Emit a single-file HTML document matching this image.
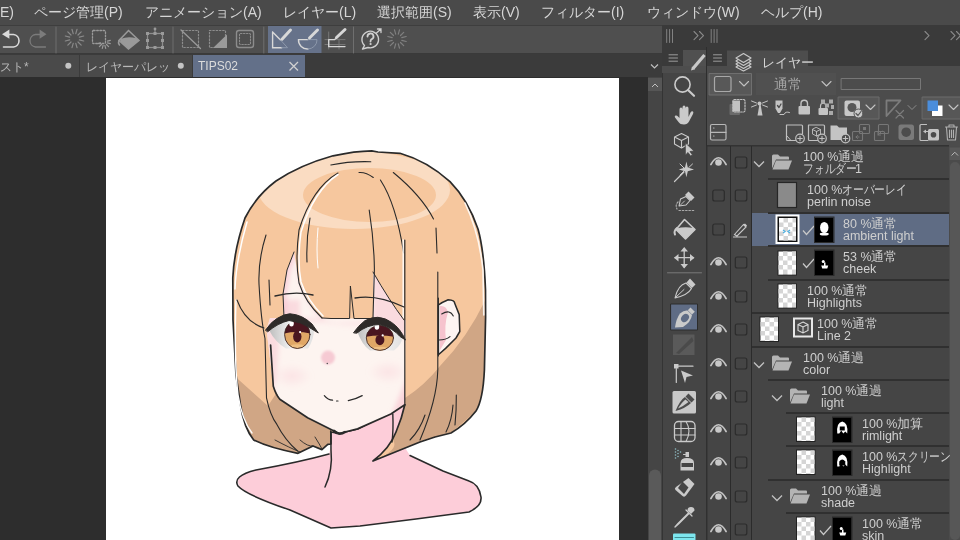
<!DOCTYPE html>
<html><head><meta charset="utf-8"><style>
*{margin:0;padding:0;box-sizing:border-box}
html,body{width:960px;height:540px;overflow:hidden;background:#2d2d2d;font-family:"Liberation Sans",sans-serif;color:#dcdcdc}
.a{position:absolute}
#menu{left:0;top:0;width:960px;height:25px;background:#4a4a4a}
#menu span{position:absolute;top:4px;font-size:14px;color:#d6d6d6;white-space:nowrap}
.gs{will-change:transform}
#tb{left:0;top:25px;width:662px;height:29px;background:#4f4f4f;border-top:1px solid #3e3e3e;border-bottom:1px solid #3a3a3a}
#tabs{left:0;top:54px;width:662px;height:23px;background:#3b3b3b}
.tab{position:absolute;top:1px;height:22px;background:#4a4a4a;font-size:12px;color:#b8b8b8;white-space:nowrap;overflow:hidden}
#canvasbg{left:0;top:77px;width:648px;height:463px;background:#2d2d2d}
#paper{left:106px;top:78px;width:513px;height:462px;background:#fff;overflow:hidden}
#vscroll{left:648px;top:77px;width:14px;height:463px;background:#434343}
#phead{left:662px;top:25px;width:298px;height:22px;background:#393939}
#tools{left:662px;top:47px;width:45px;height:493px;background:#464646}
#layers{left:707px;top:47px;width:253px;height:493px;background:#474747}
.kn{display:inline-block;white-space:nowrap;vertical-align:top}.kn span{display:inline-block;transform:scaleX(0.83);transform-origin:0 0}
.lt{position:absolute;font-size:12.5px;line-height:12px;color:#cfcfcf;white-space:nowrap}
</style></head><body><div class="gs a" style="left:0;top:0;width:960px;height:540px">
<div id="menu" class="a"><span style="left:0px">E)</span><span style="left:34px">ページ管理(P)</span><span style="left:145px">アニメーション(A)</span><span style="left:283px">レイヤー(L)</span><span style="left:377px">選択範囲(S)</span><span style="left:473px">表示(V)</span><span style="left:541px">フィルター(I)</span><span style="left:647px">ウィンドウ(W)</span><span style="left:761px">ヘルプ(H)</span></div>
<div id="tb" class="a"></div>
<svg class="a" style="left:0;top:0" width="662" height="54" viewBox="0 0 662 54">
<rect x="268" y="26" width="53.5" height="27" fill="#66728a"/>
<g fill="none" stroke-linecap="round">
<!-- undo -->
<path d="M2 34.2L9.4 29.6L9.4 38.8Z" fill="#dadada"/>
<path d="M8 34.5H13.5A6.3 6.3 0 0 1 13.5 47H3.5" stroke="#dadada" stroke-width="1.6"/>
<!-- redo -->
<path d="M46.5 34.2L39.6 29.6L39.6 38.8Z" fill="#7c7c7c"/>
<path d="M41 34.5H35.5A6.3 6.3 0 0 0 35.5 47H45.5" stroke="#7c7c7c" stroke-width="1.3"/>
<path d="M56 27V53" stroke="#6f6f6f" stroke-width="1"/>
<path d="M79.3 39.8L83.7 41.0M78.0 42.0L81.2 45.2M75.8 43.3L77.0 47.7M73.2 43.3L72.0 47.7M71.0 42.0L67.8 45.2M69.7 39.8L65.3 41.0M69.7 37.2L65.3 36.0M71.0 35.0L67.8 31.8M73.2 33.7L72.0 29.3M75.8 33.7L77.0 29.3M78.0 35.0L81.2 31.8M79.3 37.2L83.7 36.0" stroke="#8a8a8a" stroke-width="1.2" stroke-linecap="round" fill="none"/>
<rect x="92.5" y="30.5" width="13" height="13" rx="1" stroke="#9a9a9a" stroke-width="1.3" stroke-dasharray="1.6 1.6"/>
<path d="M107.4 42.9L110.3 43.7M106.5 44.5L108.6 46.6M104.9 45.4L105.7 48.3M103.1 45.4L102.3 48.3M101.5 44.5L99.4 46.6M100.6 42.9L97.7 43.7M107.4 41.1L110.3 40.3" stroke="#9a9a9a" stroke-width="1.2" stroke-linecap="round" fill="none"/>
<!-- fill diamond -->
<path d="M128.5 30.5L139 40.5L128.5 49L119 40.5Z" stroke="#9a9a9a" stroke-width="1.5"/>
<path d="M121 38.8Q128 36 136.5 38.3L139 40.5L128.5 49L120 41Z" fill="#9a9a9a"/>
<path d="M121 38.5Q117 42 119.5 45" stroke="#9a9a9a" stroke-width="1.6"/>
<!-- transform -->
<rect x="147.5" y="33.5" width="15" height="14" stroke="#8e8e8e" stroke-width="1.3"/>
<path d="M155 33.5V29" stroke="#8e8e8e" stroke-width="1.2"/>
<g fill="#9a9a9a"><rect x="146" y="32" width="3" height="3"/><rect x="161" y="32" width="3" height="3"/><rect x="146" y="46" width="3" height="3"/><rect x="161" y="46" width="3" height="3"/><rect x="153.5" y="32" width="3" height="3"/><rect x="153.5" y="46" width="3" height="3"/><rect x="146" y="39" width="3" height="3"/><rect x="161" y="39" width="3" height="3"/><circle cx="155" cy="29" r="1.4"/></g>
<path d="M173 27V53" stroke="#6f6f6f" stroke-width="1"/>
<!-- dotted square diag -->
<rect x="182.5" y="30.5" width="16" height="17" stroke="#8c8c8c" stroke-width="1.2" stroke-dasharray="1.5 1.8"/>
<path d="M181 30L200.5 48.5" stroke="#9a9a9a" stroke-width="1.3"/>
<rect x="209.5" y="30.5" width="16" height="17" stroke="#8c8c8c" stroke-width="1.2" stroke-dasharray="1.5 1.8"/>
<path d="M227 34.5V48H213Z" fill="#9a9a9a"/>
<rect x="236.5" y="30.5" width="17" height="17" rx="2.5" stroke="#8c8c8c" stroke-width="1.4"/>
<rect x="239.5" y="33.5" width="11" height="11" rx="1" stroke="#8c8c8c" stroke-width="1.1" stroke-dasharray="1.5 1.5"/>
<path d="M263.8 27V53" stroke="#6f6f6f" stroke-width="1"/>
<!-- ruler triangle -->
<path d="M272.6 32V47.7H281.7M272.6 32L280.5 40" stroke="#d8d8d8" stroke-width="1.4"/>
<path d="M281.7 47.7H287.5L280.5 40" stroke="#8d98ab" stroke-width="1"/>
<path d="M282 39.2L290.5 30" stroke="#d8d8d8" stroke-width="3"/>
<!-- semicircle -->
<path d="M298.5 39.6H308" stroke="#d8d8d8" stroke-width="1.4"/>
<path d="M298.5 39.6A9 9 0 0 0 308 49" stroke="#d8d8d8" stroke-width="1.4"/>
<path d="M308 49A9 9 0 0 0 317 39.6H308" stroke="#8d98ab" stroke-width="1"/>
<path d="M309.5 38L317.5 30" stroke="#d8d8d8" stroke-width="3"/>
<!-- grid ruler -->
<path d="M328.7 32V49M325 39.6H345M339 39V49M325 44.5H345" stroke="#777" stroke-width="1"/>
<path d="M328.7 39.6V46.6H345M328.7 39.6H334.5L336 38.5" stroke="#d6d6d6" stroke-width="1.4"/>
<path d="M336.5 37.5L345 29.5" stroke="#d6d6d6" stroke-width="3"/>
<path d="M353.5 27V53" stroke="#6f6f6f" stroke-width="1"/>
<!-- help -->
<path d="M364.5 45.5A8.3 8.3 0 1 1 368 47.5L362.5 49Z" stroke="#d0d0d0" stroke-width="1.4" stroke-linejoin="round"/>
<path d="M376.5 33L381 29M377.5 29H381V32.5" stroke="#d0d0d0" stroke-width="1.3"/>
<path d="M367.5 36.5A3 3 0 1 1 371.5 39.3Q370.5 40 370.5 41.5" stroke="#d0d0d0" stroke-width="1.8"/>
<circle cx="370.6" cy="44" r="1.1" fill="#d0d0d0"/>
<path d="M401.8 40.3L406.2 41.5M400.5 42.5L403.7 45.7M398.3 43.8L399.5 48.2M395.7 43.8L394.5 48.2M393.5 42.5L390.3 45.7M392.2 40.3L387.8 41.5M392.2 37.7L387.8 36.5M393.5 35.5L390.3 32.3M395.7 34.2L394.5 29.8M398.3 34.2L399.5 29.8M400.5 35.5L403.7 32.3M401.8 37.7L406.2 36.5" stroke="#808080" stroke-width="1.2" stroke-linecap="round" fill="none"/>
</g></svg>
<div id="tabs" class="a">
<div class="tab" style="left:0;width:79px"><span class="a" style="left:0;top:4px">スト*</span></div>
<div class="tab" style="left:80px;width:112px"><span class="a" style="left:6px;top:4px">レイヤーパレッ</span></div>
<div class="tab" style="left:193px;width:112px;background:#637089;color:#dcdcdc"><span class="a" style="left:5px;top:4px">TIPS02</span></div>
<svg class="a" style="left:0;top:0" width="662" height="23">
<circle cx="68.3" cy="11.8" r="3" fill="#c4c4c4"/><circle cx="180.8" cy="11.8" r="3" fill="#c4c4c4"/>
<path d="M289.5 8L298 16.5M298 8L289.5 16.5" stroke="#d0d0d0" stroke-width="1.3"/>
<path d="M651 10.5L654.5 14L658 10.5" stroke="#c0c0c0" stroke-width="1.2" fill="none"/>
</svg>
</div>
<div id="canvasbg" class="a"></div>
<div id="paper" class="a"><svg class="a" style="left:0;top:0" width="513" height="462" viewBox="106 78 513 462"><g stroke-linecap="round" stroke-linejoin="round">
<defs><clipPath id="hc"><path d="M331 444 L327.8 444.4 L321.9 449.6 L313 446 L298 453.3 Q270 448 253.7 440 Q244 428 240.5 405 L236 375 L233 320 L232.8 278 Q234 250 245 218 Q256 196 276 181 Q300 165 333 155.8 Q355 151 371.7 150.8 L378 152 L400 153.3 Q427 161 450 181.7 Q468 200 478 229 Q484 250 485.5 290 L485.6 317 L484.4 370 Q483 400 476 411 Q465 425 451 433 L435 437 L420 442 Q400 450 373 461 Q390 448 396 432 Q402 418 404.8 404.8 L357.6 428.9 L339 433.5 L331 432 Z"/></clipPath><radialGradient id="bl"><stop offset="0" stop-color="#f7c3cf" stop-opacity="0.35"/><stop offset="1" stop-color="#f7c3cf" stop-opacity="0"/></radialGradient></defs>
<path d="M331 446 L329 454 Q300 462 256 470 Q232 476 240 487 Q250 496 290 510 L331 528 L360 526 L416 519 L469 512 Q482 506 481 497 Q479 484 469 481 L443 471 L410 455.5 L400 440 L405 404 L339 433.5 L331 432 Z" fill="#fdcdd9"/>
<path d="M329 454 Q300 462 256 470 Q232 476 238 486 Q246 495 290 510 L331 528 L360 526 L416 519 L469 512 Q482 506 481 497 Q479 484 469 481 L443 471 L410 455.5" fill="none" stroke="#2a2a2a" stroke-width="1.6"/>
<path d="M331 444 L327.8 444.4 L321.9 449.6 L313 446 L298 453.3 Q270 448 253.7 440 Q244 428 240.5 405 L236 375 L233 320 L232.8 278 Q234 250 245 218 Q256 196 276 181 Q300 165 333 155.8 Q355 151 371.7 150.8 L378 152 L400 153.3 Q427 161 450 181.7 Q468 200 478 229 Q484 250 485.5 290 L485.6 317 L484.4 370 Q483 400 476 411 Q465 425 451 433 L435 437 L420 442 Q400 450 373 461 Q390 448 396 432 Q402 418 404.8 404.8 L357.6 428.9 L339 433.5 L331 432 Z" fill="#f6c79e"/>
<g clip-path="url(#hc)">
<path d="M258 190 A96 39 0 1 0 450 190 A96 39 0 1 0 258 190 Z M303 195 A66.5 27 0 1 1 436 195 A66.5 27 0 1 1 303 195 Z" fill="#fadcc2" fill-rule="evenodd"/>
<path d="M230 372 Q250 390 268 406 L277 392 Q290 405 307.6 417.8 L331 430 L331 460 L230 460 Z" fill="#d0a685"/>
<path d="M490 290 Q470 335 440 366 Q425 385 405 398 L393 440 Q400 450 373 461 L420 442 L435 437 L451 433 L476 411 L490 380 Z" fill="#d0a685"/>
<path d="M237 385 Q240 415 250 433 L245 433 Q236 410 234 385 Z" fill="#fbe6c8"/>
</g>
<path d="M331 444 L327.8 444.4 L321.9 449.6 L313 446 L298 453.3 Q270 448 253.7 440 Q244 428 240.5 405 L236 375 L233 320 L232.8 278 Q234 250 245 218 Q256 196 276 181 Q300 165 333 155.8 Q355 151 371.7 150.8 L378 152 L400 153.3 Q427 161 450 181.7 Q468 200 478 229 Q484 250 485.5 290 L485.6 317 L484.4 370 Q483 400 476 411 Q465 425 451 433 L435 437 L420 442 Q400 450 373 461 Q390 448 396 432 Q402 418 404.8 404.8 L357.6 428.9 L339 433.5 L331 432 Z" fill="none" stroke="#2a2a2a" stroke-width="1.7"/>
<path d="M236 300 Q234 360 238 395 Q242 420 252 433" fill="none" stroke="#fff" stroke-width="1.4"/>
<path d="M266.5 329.6 L270 318 L284 318 L283 294 L287 270 L294 252 L297 270 L300 283 L308 300 L317 313 L322 318 L331 318.5 L373 318.5 L373 272 Q389 300 404 320 L405.5 320 L404.8 404.8 L390.9 414 L357.6 428.9 L339 433.5 L307.6 417.8 L279.8 399.3 L273.3 386.3 Z" fill="#fdf4f0"/>
<defs><clipPath id="fc"><path d="M266.5 329.6 L270 318 L284 318 L283 294 L287 270 L294 252 L297 270 L300 283 L308 300 L317 313 L322 318 L331 318.5 L373 318.5 L373 272 Q389 300 404 320 L405.5 320 L404.8 404.8 L390.9 414 L357.6 428.9 L339 433.5 L307.6 417.8 L279.8 399.3 L273.3 386.3 Z"/></clipPath><filter id="blr" x="-20%" y="-20%" width="140%" height="140%"><feGaussianBlur stdDeviation="2.5"/></filter></defs><g clip-path="url(#fc)"><g filter="url(#blr)">
<path d="M260 300 L300 300 L300 318 Q320 318 335 323 L372 322 L373 270 L410 270 L410 345 Q398 328 385 323 L372 324 Q340 326 325 322 Q300 320 290 325 L280 335 L276 380 Q272 390 275 395 L260 395 Z" fill="#f8c9d3" opacity="0.6"/>
<path d="M410 370 Q400 395 392 414 L410 414 Z" fill="#f8c9d3" opacity="0.75"/>
<path d="M294 252 L287 270 L283 294 L284 318" fill="none" stroke="#f8c9d3" stroke-width="7" opacity="0.8"/>
<path d="M299 270 Q303 295 322 318" fill="none" stroke="#f8c9d3" stroke-width="4" opacity="0.6"/>
<ellipse cx="292" cy="376" rx="20" ry="12" fill="url(#bl)"/><ellipse cx="388" cy="372" rx="20" ry="12" fill="url(#bl)"/>
</g></g>
<path d="M270.6 345 L273.3 386.3 Q276 395 279.8 399.3 L307.6 417.8 L339 433.5 L357.6 428.9 L390.9 414 L404.8 404.8" fill="none" stroke="#2a2a2a" stroke-width="1.7"/>
<path d="M334 431 Q339 436 345 432" fill="none" stroke="#2a2a2a" stroke-width="2.6"/>
<path d="M275 440 Q290 448 300 452 M300 440 Q308 447 313 446 M315 437 Q320 445 322 449" fill="none" stroke="#2a2a2a" stroke-width="0.9"/>
<path d="M392.8 414 Q393.5 430 392 442" fill="none" stroke="#2a2a2a" stroke-width="1.4"/>
<path d="M330.7 431 Q331 440 331 450 Q333 470 325 487" fill="none" stroke="#2a2a2a" stroke-width="1.5"/>
<path d="M338 173 Q312 188 299 230 Q295 260 299 283 Q305 302 322 318" fill="none" stroke="#2a2a2a" stroke-width="1.1"/>
<path d="M338 174.5 Q314 190 301 232 Q297 260 301 282 Q307 300 323 316" fill="none" stroke="#fff" stroke-width="1.5"/>
<path d="M369.2 210 Q374 240 374.4 269 L373 318" fill="none" stroke="#2a2a2a" stroke-width="1.1"/>
<path d="M380.4 180 Q396 203.7 403.7 253" fill="none" stroke="#2a2a2a" stroke-width="1.1"/>
<path d="M465 203 Q479 232 483 270 L483.8 315" fill="none" stroke="#fff" stroke-width="1.6" opacity="0.85"/>
<path d="M393.3 172.5 Q421.8 196 433.5 219 M436 228 L437 253" fill="none" stroke="#2a2a2a" stroke-width="1.1"/>
<path d="M330.8 165 Q350 161 370.8 161.7 M359 172.5 Q366 172 373.3 177.5" fill="none" stroke="#2a2a2a" stroke-width="1.1"/>
<path d="M403.2 240 L403.2 318" fill="none" stroke="#fff" stroke-width="1.3"/>
<path d="M404.8 240 L404.8 404.8" fill="none" stroke="#2a2a2a" stroke-width="1.2"/>
<path d="M437.8 272 V370 Q437 400 420 440" fill="none" stroke="#2a2a2a" stroke-width="1.1"/>
<path d="M266 235 Q258 260 259 284 Q261 320 265 338.5 L266.5 397.8 Q270 415 276.9 424.4 Q285 440 297.6 451" fill="none" stroke="#2a2a2a" stroke-width="1.1"/>
<path d="M237 300 Q245 322 264 328" fill="none" stroke="#2a2a2a" stroke-width="1.1"/>
<path d="M247 222 Q236 260 235 289" fill="none" stroke="#fff" stroke-width="1.5"/>
<path d="M269 280 L270 305" fill="none" stroke="#2a2a2a" stroke-width="1.1"/>
<path d="M310 218 Q306 240 307 262" fill="none" stroke="#2a2a2a" stroke-width="1.1"/>
<path d="M318 228 Q316 250 318 268" fill="none" stroke="#fff" stroke-width="1"/>
<path d="M456.3 395 Q456.5 410 455 425" fill="none" stroke="#2a2a2a" stroke-width="1.1"/>
<path d="M410 440 Q420 430 425 415 M446 432 Q452 420 453 405" fill="none" stroke="#2a2a2a" stroke-width="1.1"/>
<path d="M322 318 L331 318.5 L349.6 318.5 L350.4 286 L354 318.5 L373 318.5" fill="none" stroke="#2a2a2a" stroke-width="1"/>
<path d="M373 272 Q389 300 404 320" fill="none" stroke="#2a2a2a" stroke-width="1"/>
<path d="M294 252 L287 270 L283 294 L284 318" fill="none" stroke="#2a2a2a" stroke-width="1"/>
<path d="M275 296 Q295 291 313 295 M355 298 Q377 294 404 307" fill="none" stroke="#2a2a2a" stroke-width="1.3"/>
<defs><clipPath id="ir1"><ellipse cx="297.3" cy="334.6" rx="12.7" ry="13.9"/></clipPath><linearGradient id="wg1" x1="0" x2="1"><stop offset="0" stop-color="#bdbdbd"/><stop offset="0.5" stop-color="#f4f4f4"/><stop offset="1" stop-color="#e0e0e0"/></linearGradient></defs><path d="M269 330 Q275 342 286 348.5 L308 348.5 Q314 340 314 328 Q300 319 288 320 Q276 323 269 330Z" fill="url(#wg1)"/><ellipse cx="297.3" cy="334.6" rx="12.7" ry="13.9" fill="#e0a766"/><g clip-path="url(#ir1)"><path d="M283.6 319.70000000000005H311.0V333.6Q297.3 330.6 283.6 333.6Z" fill="#4a1620"/><ellipse cx="297.3" cy="336.6" rx="4.191" ry="5.838" fill="#4a1620"/><ellipse cx="297.3" cy="348.5" rx="10.16" ry="4.17" fill="#efbf82"/></g><ellipse cx="297.3" cy="334.6" rx="12.7" ry="13.9" fill="none" stroke="#3d2626" stroke-width="0.9"/><ellipse cx="291.5" cy="323.5" rx="2.3" ry="2.9" fill="#fff"/><circle cx="300.1" cy="332.1" r="1.1" fill="#fff"/><path d="M265.6 330 Q271 322 277 318.5 Q284 314 290 313.8 Q302 314.5 312 324 L318.3 333 L311 328.5 Q301 321.5 289 320.5 Q278 323 268 331.5 Z" fill="#2e2a28" stroke="#2e2a28" stroke-width="1"/>
<defs><clipPath id="ir2"><ellipse cx="379.9" cy="337.9" rx="13.6" ry="12.5"/></clipPath><linearGradient id="wg2" x1="0" x2="1"><stop offset="0" stop-color="#bdbdbd"/><stop offset="0.5" stop-color="#f4f4f4"/><stop offset="1" stop-color="#e0e0e0"/></linearGradient></defs><path d="M357 331 Q362 345 370 350.5 L394 350.5 Q402 345 403 335 Q393 325 380 323 Q366 324 357 331Z" fill="url(#wg2)"/><ellipse cx="379.9" cy="337.9" rx="13.6" ry="12.5" fill="#e0a766"/><g clip-path="url(#ir2)"><path d="M365.29999999999995 324.4H394.5V336.9Q379.9 333.9 365.29999999999995 336.9Z" fill="#4a1620"/><ellipse cx="379.9" cy="339.9" rx="4.488" ry="5.25" fill="#4a1620"/><ellipse cx="379.9" cy="350.4" rx="10.88" ry="3.75" fill="#efbf82"/></g><ellipse cx="379.9" cy="337.9" rx="13.6" ry="12.5" fill="none" stroke="#3d2626" stroke-width="0.9"/><ellipse cx="376.9" cy="326.8" rx="2.3" ry="2.9" fill="#fff"/><circle cx="382.7" cy="335.4" r="1.1" fill="#fff"/><path d="M353.7 332.5 Q358 326 364.8 320.7 Q372 317 377.8 317.3 Q386 318 391.7 322.5 Q400 328 405.5 340 L400 336.5 Q393 328 380 324.5 Q367 324.5 357 333 Z" fill="#2e2a28" stroke="#2e2a28" stroke-width="1"/>
<defs><filter id="nb" x="-50%" y="-50%" width="200%" height="200%"><feGaussianBlur stdDeviation="1.2"/></filter></defs><circle cx="328" cy="357.6" r="7" fill="#f6cad3" filter="url(#nb)"/><circle cx="327.3" cy="363.5" r="0.8" fill="#555"/>
<path d="M324.3 395.6 Q328 400 332.6 400.2 M336.5 401 L338 401 M348.3 400.7 Q356 399 362.2 395.6" fill="none" stroke="#2a2a2a" stroke-width="1.2"/>
<path d="M438.4 305 Q441.7 302.3 448.2 299.7 Q454.6 300 454.6 303 L459.2 314.6 L459.8 331.5 L456 338 L445.6 348.4 L438.4 354.8 Z" fill="#fdf4f2" stroke="#2a2a2a" stroke-width="1.5"/>
<path d="M440 306 Q446 305 448 312 Q444 325 446 340 L440 350 Z" fill="#f6c3ce"/>
<path d="M441.7 314 Q450 309 453.3 316 M439 340 Q446 340 450 336.7" fill="none" stroke="#2a2a2a" stroke-width="1.1"/>
<path d="M438.4 298 V356" fill="none" stroke="#2a2a2a" stroke-width="1.1"/>
</g></svg></div>
<div id="vscroll" class="a"></div>
<div id="phead" class="a"></div>
<div id="tools" class="a"></div>
<div id="layers" class="a"></div>
<svg class="a" style="left:0;top:0" width="960" height="146">
<g fill="none" stroke-linecap="round" stroke-linejoin="round">
<rect x="662" y="25" width="298" height="22" fill="#3a3a3a" stroke="none"/>
<path d="M666.7 29.5V42.5M669.6 29.5V42.5M672.5 29.5V42.5M711.2 29.5V42.5M714.1 29.5V42.5M717 29.5V42.5" stroke="#8a8a8a" stroke-width="0.9"/>
<path d="M694 31.5L698 35.6L694 39.7M699.5 31.5L703.5 35.6L699.5 39.7" stroke="#8a8a8a" stroke-width="1.1"/>
<path d="M925 31.5L929 35.6L925 39.7M951 31.5L955 35.6L951 39.7M956.5 31.5L960.5 35.6L956.5 39.7" stroke="#8a8a8a" stroke-width="1.1"/>
<rect x="662" y="47" width="45" height="26" fill="#3a3a3a" stroke="none"/>
<rect x="683" y="50" width="23" height="17" fill="#505050" stroke="none"/>
<rect x="662" y="66" width="44" height="7" fill="#4d4d4d" stroke="none"/>
<path d="M669 54.8H677.5M669 58H677.5M669 61.2H677.5" stroke="#9c9c9c" stroke-width="1"/>
<path d="M693 68.5L704.5 55" stroke="#c8c8c8" stroke-width="3.2" stroke-linecap="butt"/><path d="M691 70.5L692 66.5L695 69.2Z" fill="#c8c8c8" stroke="none"/>
<rect x="662" y="73" width="44" height="73" fill="#454545" stroke="none"/><rect x="662" y="73" width="1" height="73" fill="#343434" stroke="none"/>
<rect x="706" y="47" width="1.2" height="99" fill="#2e2e2e" stroke="none"/>
<rect x="707" y="47" width="253" height="19" fill="#3a3a3a" stroke="none"/>
<rect x="727" y="50.5" width="81" height="16" fill="#4d4d4d" stroke="none"/>
<path d="M713.5 54.8H721.5M713.5 58H721.5M713.5 61.2H721.5" stroke="#9c9c9c" stroke-width="1"/>
</g></svg>
<svg class="a" style="left:0;top:0" width="960" height="146"><g fill="none" stroke-linecap="round" stroke-linejoin="round">
<rect x="707" y="66" width="253" height="80" fill="#4c4c4c" stroke="none"/>
<path d="M743.5 53.5L751 58L743.5 62.5L736 58Z" stroke="#c8c8c8" stroke-width="1.2"/>
<path d="M738.2 59.5L736 61L743.5 65.5L751 61L748.8 59.5M738.2 62.5L736 64L743.5 68.5L751 64L748.8 62.5M738.2 65.5L736 67L743.5 71L751 67L748.8 65.5" stroke="#c8c8c8" stroke-width="1.2"/>
<rect x="709.5" y="73.5" width="42" height="21.5" fill="#585858" stroke="#6f6f6f" stroke-width="1"/>
<rect x="714.5" y="76.5" width="16.5" height="15" rx="2" stroke="#a8a8a8" stroke-width="1.2"/>
<path d="M739.5 81.5L744 86L748.5 81.5" stroke="#c0c0c0" stroke-width="1.1"/>
<rect x="756" y="73" width="80" height="22" fill="#505050" stroke="none"/>
<path d="M822 81.5L826.5 86L831 81.5" stroke="#c0c0c0" stroke-width="1.1"/>
<rect x="841.5" y="78.5" width="79" height="11" stroke="#777" stroke-width="1"/>
<rect x="729.5" y="104" width="10.5" height="11" rx="1" fill="#6a6a6a" stroke="none"/>
<rect x="732.5" y="100.5" width="7.5" height="11" fill="#c2c2c2" stroke="none"/>
<rect x="733" y="99.5" width="12" height="12.5" rx="1.5" stroke="#c2c2c2" stroke-width="1.2" stroke-dasharray="1.6 1.4"/>
<path d="M757.5 115.5L759.5 104H760.5L762.5 115.5Z" fill="#c4c4c4" stroke="none"/><circle cx="759.5" cy="103.5" r="2" fill="#c4c4c4" stroke="none"/>
<path d="M751.5 101L756.5 103M767.5 101L762.5 103M751.5 107L756.5 105M767.5 107L762.5 105" stroke="#c4c4c4" stroke-width="1"/>
<path d="M775.5 100.5H782.5V108.5L780 113H778L775.5 108.5Z" fill="#c4c4c4" stroke="none"/><path d="M777.5 105.5L779 107.5L781 104" stroke="#4c4c4c" stroke-width="1.3"/>
<path d="M780 114.5H784Q785.5 111 789.5 112.5" stroke="#c4c4c4" stroke-width="1"/>
<rect x="798.5" y="106" width="11.5" height="8.5" rx="1" fill="#c4c4c4" stroke="none"/><path d="M801 106V103.5A3.2 3.2 0 0 1 807.5 103.5V106" stroke="#c4c4c4" stroke-width="1.4"/>
<rect x="818.5" y="108" width="9.5" height="7" rx="1" fill="#c4c4c4" stroke="none"/><path d="M820.5 108V106A2.7 2.7 0 0 1 826 106V108" stroke="#c4c4c4" stroke-width="1.2"/>
<g fill="#aaa" stroke="none"><rect x="821" y="99.5" width="4" height="4"/><rect x="829" y="99.5" width="4" height="4"/><rect x="825" y="103.5" width="4" height="4"/><rect x="829" y="111" width="4" height="4"/><rect x="831" y="105" width="3" height="4"/></g>
<rect x="838.5" y="97" width="40.5" height="22" fill="#575757" stroke="#6c6c6c" stroke-width="1"/>
<rect x="844.5" y="100.5" width="15.5" height="15.5" rx="2" fill="#c8c8c8" stroke="none"/><circle cx="852" cy="107.5" r="4.5" fill="#575757" stroke="none"/>
<circle cx="858.5" cy="113.5" r="4.5" fill="#c8c8c8" stroke="#575757" stroke-width="1"/><path d="M856 113.5L858 115.5L861 111.5" stroke="#575757" stroke-width="1.2"/>
<path d="M866 105L870.5 109.5L875 105" stroke="#c4c4c4" stroke-width="1.1"/>
<path d="M886.5 116L900.5 100.5L886.5 100.5Z" stroke="#7c7c7c" stroke-width="1.8"/><path d="M896 110.5L903.5 118M903.5 110.5L896 118" stroke="#7c7c7c" stroke-width="1.2"/>
<path d="M908 105.5L912 109.5L916 105.5" stroke="#8a8a8a" stroke-width="1"/>
<rect x="922.5" y="97" width="40" height="22" fill="#575757" stroke="#6c6c6c" stroke-width="1"/>
<rect x="932" y="105.5" width="10.5" height="10.5" fill="#fff" stroke="none"/><rect x="927.5" y="100.5" width="10.5" height="10.5" fill="#4a8ddb" stroke="none"/>
<path d="M949 105L953.5 109.5L958 105" stroke="#c4c4c4" stroke-width="1.1"/>
<rect x="710.5" y="124.5" width="15.5" height="15.5" rx="1.5" stroke="#b8b8b8" stroke-width="1.2"/><path d="M710.5 132.3H726M713.5 128H714M713.5 136H714" stroke="#b8b8b8" stroke-width="1.2"/>
<path d="M786.5 125H801.5Q802.5 125 802.5 126V134M795.5 140.5H787.5Q786.5 140.5 786.5 139.5V125" stroke="#c0c0c0" stroke-width="1.2"/><path d="M787 136L790.5 140" stroke="#c0c0c0" stroke-width="1"/><circle cx="800" cy="138.5" r="4.3" fill="#4c4c4c" stroke="#c0c0c0" stroke-width="1.2"/><path d="M797.7 138.5H802.3M800 136.2V140.8" stroke="#c0c0c0" stroke-width="1.1"/>
<path d="M808.5 125H823.5Q824.5 125 824.5 126V134M817.5 140.5H809.5Q808.5 140.5 808.5 139.5V125" stroke="#c0c0c0" stroke-width="1.2"/><path d="M816.5 127.5L820.5 129.5V134L816.5 136L812.5 134V129.5ZM812.5 129.5L816.5 131.5L820.5 129.5M816.5 131.5V136" stroke="#c0c0c0" stroke-width="0.9"/><circle cx="822" cy="138.5" r="4.3" fill="#4c4c4c" stroke="#c0c0c0" stroke-width="1.2"/><path d="M819.7 138.5H824.3M822 136.2V140.8" stroke="#c0c0c0" stroke-width="1.1"/>
<path d="M830.5 140V125.5H837L839 127.5H847V140Z" fill="#c4c4c4" stroke="none"/><circle cx="845.5" cy="138.5" r="4.3" fill="#4c4c4c" stroke="#c0c0c0" stroke-width="1.2"/><path d="M843.2 138.5H847.8M845.5 136.2V140.8" stroke="#c0c0c0" stroke-width="1.1"/>
<g stroke="#777" stroke-width="1.1"><rect x="859.5" y="124.5" width="10" height="9" rx="1"/><rect x="852.5" y="131.5" width="10" height="9" rx="1"/><rect x="878.5" y="124.5" width="10" height="9" rx="1"/><rect x="874.5" y="131.5" width="10" height="9" rx="1"/></g>
<rect x="863" y="127" width="3" height="3" fill="#777" stroke="none"/><path d="M882 131L878 135M878 132.5V135H880.5" stroke="#777" stroke-width="1"/><path d="M859 137H856M857.5 135.5L856 137L857.5 138.5" stroke="#777" stroke-width="1"/>
<rect x="898.5" y="124.5" width="15.5" height="15.5" rx="2.5" fill="#7a7a7a" stroke="none"/><circle cx="906.2" cy="132.2" r="4.8" fill="#4c4c4c" stroke="none"/>
<path d="M926.5 124.5H921Q920 124.5 920 125.5V139.5Q920 140.5 921 140.5H928" stroke="#c0c0c0" stroke-width="1.2"/><rect x="928" y="129" width="11" height="11.5" rx="1.5" fill="#c4c4c4" stroke="none"/><circle cx="933.5" cy="134.8" r="2.8" fill="#4c4c4c" stroke="none"/><path d="M923 131.5L926 129.5V133.5Z" fill="#c0c0c0" stroke="none"/><path d="M926 131.5H928" stroke="#c0c0c0" stroke-width="1"/>
<path d="M945.5 127H957.5M949 127V125H954V127M946.5 127.5L947.5 140H955.5L956.5 127.5M949.5 130V137.5M951.5 130V137.5M953.5 130V137.5" stroke="#b0b0b0" stroke-width="1.1"/>
</g></svg>
<div class="a" style="left:762px;top:55px;font-size:12.5px;color:#d4d4d4;white-space:nowrap">レイヤー</div>
<div class="a" style="left:774px;top:76px;font-size:14px;color:#a4a4a4;white-space:nowrap">通常</div>
<svg class="a" style="left:662px;top:146px" width="45" height="394" viewBox="662 146 45 394">
<rect x="662" y="146" width="44" height="394" fill="#454545"/><rect x="706" y="146" width="1.2" height="394" fill="#2e2e2e"/><rect x="662" y="146" width="1" height="394" fill="#343434"/>
</svg>
<svg class="a" style="left:662px;top:73px" width="45" height="467" viewBox="662 73 45 467"><g fill="none" stroke-linecap="round" stroke-linejoin="round">
<circle cx="682.5" cy="84.5" r="7.6" stroke="#cacaca" stroke-width="1.6"/><path d="M688 90L694 95.8" stroke="#cacaca" stroke-width="2.2"/>
<path d="M679.5 118V109.5Q679.5 107.5 681 107.5Q682.5 107.5 682.5 109.5V116.5V107.5Q682.5 105.5 684 105.5Q685.5 105.5 685.5 107.5V116.5V108.5Q685.5 106.5 687 106.5Q688.5 106.5 688.5 108.5V117L690.5 112.5Q691.8 110.5 693 111.5Q693.8 112.2 693 114L689 121.5Q687.5 124.5 684 124.5Q680 124.5 678.5 122L675 117.5Q674.2 116 675.5 115.5Q676.8 115 678 116.5Z" fill="#cacaca" stroke="none"/>
<path d="M681.5 133.5L688.5 137V144L681.5 148L674.5 144V137ZM674.5 137L681.5 140.5L688.5 137M681.5 140.5V148" stroke="#cacaca" stroke-width="1.1"/>
<path d="M685.5 143L694 151L690 151.5L692.5 155L690.5 156L688 152.5L685.5 155Z" fill="#cacaca" stroke="#454545" stroke-width="0.8"/>
<path d="M686.4 161.5L687.8 167.5L694 169.4L687.8 171.3L686.4 177.3L685 171.3L678.8 169.4L685 167.5Z" fill="#cacaca" stroke="none"/><path d="M680 164L684 168M692.5 164L688.8 167.5M680 175L684 171" stroke="#cacaca" stroke-width="1"/><path d="M684 172L674.5 181.5" stroke="#cacaca" stroke-width="1.2"/>
<path d="M688.5 191.5L694.5 197.5L691 201L685 195Z" fill="#cacaca" stroke="none"/><path d="M686 196.5L690 200.5L686 205L679 206L680.5 199Z" stroke="#cacaca" stroke-width="1.1"/><path d="M680 205.5L684.5 201" stroke="#cacaca" stroke-width="0.9"/>
<path d="M678 202Q675 205 677 209M679 210.5H694.5" stroke="#aaa" stroke-width="1.2" stroke-dasharray="1.5 1.8"/>
<path d="M684.5 219.5L695 229.5L685.5 239L676 229.5Z" stroke="#cacaca" stroke-width="1.6"/><path d="M676.5 228.5Q684 226.5 693.5 228L695 229.5L685.5 239L676 229.5Z" fill="#cacaca" stroke="none"/><path d="M677 228Q673.5 231 675 234.5" stroke="#cacaca" stroke-width="2"/>
<path d="M684.2 249V267M675 257.7H693.5" stroke="#cacaca" stroke-width="1.3"/><path d="M684.2 247L680.5 251.5H688ZM684.2 268.5L680.5 264H688ZM674 257.7L678.5 254V261.5ZM694.5 257.7L690 254V261.5Z" fill="#cacaca" stroke="none"/>
<path d="M667.5 272.8H701.5" stroke="#7a7a7a" stroke-width="1"/>
<path d="M690 278.5L695.5 284.5L692 288L686.5 282.5Z" fill="#cacaca" stroke="none"/><path d="M686 283L691.5 288.5Q688 295 675 298Q678 285 686 283Z" stroke="#cacaca" stroke-width="1.1"/><path d="M675.5 297.5L684 289.5" stroke="#cacaca" stroke-width="1"/>
<rect x="671" y="304" width="26.5" height="26" fill="#5f6c85" stroke="#2c2c2c" stroke-width="1"/>
<path d="M690.5 307.5L694.8 311.8L692 314.5L687.8 310.3Z" fill="#cacaca" stroke="none"/><path d="M687.5 310.5L692 315Q691 322 683 327L675 327.5Q676 319 680 313.5Q684 310 687.5 310.5Z" fill="#cacaca" stroke="none"/><ellipse cx="685" cy="318" rx="3.5" ry="4.5" transform="rotate(40 685 318)" fill="#5f6c85"/>
<rect x="673" y="334.5" width="21.5" height="20.5" fill="#5a5a5a"/><path d="M676 353L692 337L693.5 341L679 354Z" fill="#4a4a4a" stroke="none"/>
<rect x="674" y="364" width="4.5" height="4.5" fill="#cacaca" stroke="none"/><path d="M676.3 368.5V382.5M678.5 366.2H693" stroke="#cacaca" stroke-width="1.2"/><path d="M681 370.5L693 375.5L686.5 377L685 383Z" fill="#cacaca" stroke="none"/>
<rect x="672.5" y="391" width="23.5" height="22.5" rx="1.5" fill="#c8c8c8" stroke="none"/><path d="M688.5 393.5L694.5 399.5L691.5 402.5L685.5 396.5Z M685 397L691 403Q686 408 675.5 411Q680 400 685 397Z" fill="#4c4c4c" stroke="none"/><path d="M678 408.5Q682 402 685.5 399.5Q687.5 401 688.5 402Q683 406.5 678 408.5Z" fill="#c8c8c8" stroke="none"/>
<rect x="674.5" y="421.5" width="20.5" height="20" rx="4" stroke="#cacaca" stroke-width="1.3"/><path d="M674.5 428.5H695M674.5 435H695M681 421.5V441.5M686 421.5Q692 431 686 441.5" stroke="#cacaca" stroke-width="1.1"/>
<path d="M680.5 470.5V463Q680.5 458 687 458Q694 458 694 463V470.5Z" fill="#cacaca" stroke="none"/><rect x="681.5" y="463" width="11.5" height="4" fill="#454545"/><rect x="685.5" y="452" width="3.5" height="5" fill="#cacaca"/><path d="M683.5 454.5H685.5" stroke="#cacaca" stroke-width="1"/>
<g fill="#8cb8c0"><circle cx="675.5" cy="449" r="0.8"/><circle cx="675.5" cy="452" r="0.8"/><circle cx="678" cy="450.5" r="0.8"/><circle cx="675.5" cy="455" r="0.8"/><circle cx="678" cy="453.5" r="0.8"/><circle cx="680.5" cy="452" r="0.8"/><circle cx="675.5" cy="458" r="0.8"/><circle cx="678" cy="456.5" r="0.8"/></g>
<path d="M688.5 478L694.5 484L686 495.5Q684.5 497.5 682.5 496L675.5 490Q674 488.5 676 487Z" fill="#cacaca" stroke="none"/><path d="M678 488L684 494L688.5 487.5L682.5 481.5Z" fill="#454545" stroke="none"/>
<path d="M691 507Q694.5 507 694.5 510.5L691 514L687.5 510.5Q687.5 507 691 507Z" fill="#cacaca" stroke="none"/><path d="M686 510L692 516M688.5 513L678 523.5L675 527L678.5 524L689 513.5" stroke="#cacaca" stroke-width="1.3"/>
<rect x="673" y="533.5" width="22.5" height="8" rx="1" fill="#7de6ee"/><path d="M675 537.5H693.5" stroke="#3f8f95" stroke-width="1"/>
</g></svg>
<svg class="a" style="left:648px;top:77px" width="14" height="463"><rect x="0" y="0" width="14" height="463" fill="#454545"/><rect x="0" y="1" width="14" height="13" fill="#565656"/><path d="M4 10L7 7L10 10" stroke="#c0c0c0" stroke-width="1" fill="none"/><rect x="1" y="392.5" width="12" height="80" rx="6" fill="#5a5a5a"/></svg>
<svg class="a" style="left:0;top:0" width="960" height="540">
<rect x="707" y="146" width="242" height="394" fill="#454545"/>
<rect x="949" y="146" width="11" height="394" fill="#4b4b4b"/>
<rect x="949.5" y="147.5" width="10.5" height="12.5" fill="#585858"/>
<path d="M951.5 155.5L954.8 152.2L958 155.5" stroke="#b8b8b8" stroke-width="1" fill="none"/>
<rect x="950" y="162" width="10" height="378" rx="5" fill="#575757"/>
<rect x="707" y="145" width="242" height="1.5" fill="#333"/>
<path d="M710.9 164.5Q718.5 151.0 726.1 164.5" stroke="#c4c4c4" stroke-width="1.7" fill="none" stroke-linecap="round"/><circle cx="718.5" cy="162.5" r="3.3" fill="#c8c8c8"/>
<rect x="735.3" y="157.0" width="11.5" height="11" rx="2" fill="none" stroke="#2c2c2c" stroke-width="1.2"/>
<path d="M754 161.5L759 166.5L764 161.5" stroke="#c0c0c0" stroke-width="1.3" fill="none"/>
<path d="M772 168.5V156.0Q772 154.5 773.5 154.5H778L780 156.5H788Q789 156.5 789 157.5V159.5H776Z" fill="#b4b4b4"/><path d="M772.5 169.5L776 160.5H792L788.5 169.5Z" fill="#b4b4b4"/>
<rect x="768" y="178" width="181" height="2" fill="#303030"/>
<rect x="712.8" y="190.0" width="11.5" height="11" rx="2" fill="none" stroke="#2c2c2c" stroke-width="1.2"/>
<rect x="735.3" y="190.0" width="11.5" height="11" rx="2" fill="none" stroke="#2c2c2c" stroke-width="1.2"/>
<rect x="777.5" y="182.5" width="19" height="25" fill="#8a8a8a" stroke="#262626" stroke-width="1.2"/>
<rect x="752" y="213" width="197" height="33" fill="#5f6c84"/>
<rect x="768" y="212" width="181" height="2" fill="#303030"/>
<rect x="712.8" y="224.0" width="11.5" height="11" rx="2" fill="none" stroke="#2c2c2c" stroke-width="1.2"/>
<path d="M733 237.0H747M734.5 234.5L743.5 224.5L746 227.0L737 236.0Z" stroke="#c8c8c8" stroke-width="1.1" fill="none"/><path d="M743.5 224.5L746 227.0L747 225.5L745 223.5Z" fill="#c8c8c8"/>
<rect x="775.5" y="214.5" width="24" height="29.5" fill="#fff"/><rect x="777.5" y="216.5" width="20" height="25.5" fill="#111"/>
<rect x="779" y="218" width="17" height="22.5" fill="#fff"/><rect x="783.5" y="218.0" width="4.5" height="4.5" fill="#d5d5d5"/><rect x="792.5" y="218.0" width="3.5" height="4.5" fill="#d5d5d5"/><rect x="779.0" y="222.5" width="4.5" height="4.5" fill="#d5d5d5"/><rect x="788.0" y="222.5" width="4.5" height="4.5" fill="#d5d5d5"/><rect x="783.5" y="227.0" width="4.5" height="4.5" fill="#d5d5d5"/><rect x="792.5" y="227.0" width="3.5" height="4.5" fill="#d5d5d5"/><rect x="779.0" y="231.5" width="4.5" height="4.5" fill="#d5d5d5"/><rect x="788.0" y="231.5" width="4.5" height="4.5" fill="#d5d5d5"/><rect x="783.5" y="236.0" width="4.5" height="4.5" fill="#d5d5d5"/><rect x="792.5" y="236.0" width="3.5" height="4.5" fill="#d5d5d5"/>
<path d="M783 230l2 1.5l-2 1.5M790 230l-2 1.5l2 1.5" stroke="#4fb0e0" stroke-width="1.3" fill="none"/>
<path d="M803 230.5L806.5 234.5L814 226.0" stroke="#c8c8c8" stroke-width="1.2" fill="none"/>
<rect x="815" y="217.5" width="18.5" height="24.5" fill="#000"/><rect x="814.5" y="217.0" width="19.5" height="25.5" fill="none" stroke="#2a2a2a" stroke-width="1"/><ellipse cx="824.25" cy="227.5" rx="4.2" ry="5.6" fill="#fff"/><ellipse cx="824.25" cy="234.0" rx="4.5" ry="1.5" fill="#fff"/>
<rect x="768" y="245" width="181" height="2" fill="#303030"/>
<path d="M710.9 264.5Q718.5 251.0 726.1 264.5" stroke="#c4c4c4" stroke-width="1.7" fill="none" stroke-linecap="round"/><circle cx="718.5" cy="262.5" r="3.3" fill="#c8c8c8"/>
<rect x="735.3" y="257.0" width="11.5" height="11" rx="2" fill="none" stroke="#2c2c2c" stroke-width="1.2"/>
<rect x="777.5" y="250.5" width="19.5" height="25" fill="#222"/>
<rect x="778.5" y="251.5" width="17.5" height="23" fill="#fff"/><rect x="783.0" y="251.5" width="4.5" height="4.5" fill="#d5d5d5"/><rect x="792.0" y="251.5" width="4.0" height="4.5" fill="#d5d5d5"/><rect x="778.5" y="256.0" width="4.5" height="4.5" fill="#d5d5d5"/><rect x="787.5" y="256.0" width="4.5" height="4.5" fill="#d5d5d5"/><rect x="783.0" y="260.5" width="4.5" height="4.5" fill="#d5d5d5"/><rect x="792.0" y="260.5" width="4.0" height="4.5" fill="#d5d5d5"/><rect x="778.5" y="265.0" width="4.5" height="4.5" fill="#d5d5d5"/><rect x="787.5" y="265.0" width="4.5" height="4.5" fill="#d5d5d5"/><rect x="783.0" y="269.5" width="4.5" height="4.5" fill="#d5d5d5"/><rect x="792.0" y="269.5" width="4.0" height="4.5" fill="#d5d5d5"/><rect x="778.5" y="274.0" width="4.5" height="0.5" fill="#d5d5d5"/><rect x="787.5" y="274.0" width="4.5" height="0.5" fill="#d5d5d5"/>
<path d="M803 263.5L806.5 267.5L814 259.0" stroke="#c8c8c8" stroke-width="1.2" fill="none"/>
<rect x="815" y="250.5" width="18.5" height="24.5" fill="#000"/><rect x="814.5" y="250.0" width="19.5" height="25.5" fill="none" stroke="#2a2a2a" stroke-width="1"/><path d="M821.25 265.5H828.25L827.25 268.5H822.25Z" fill="#fff"/><circle cx="823.25" cy="261.5" r="1.5" fill="#fff"/><path d="M824.75 262.5V266.5" stroke="#fff" stroke-width="1.5"/>
<rect x="768" y="279" width="181" height="2" fill="#303030"/>
<path d="M710.9 298.5Q718.5 285.0 726.1 298.5" stroke="#c4c4c4" stroke-width="1.7" fill="none" stroke-linecap="round"/><circle cx="718.5" cy="296.5" r="3.3" fill="#c8c8c8"/>
<rect x="735.3" y="291.0" width="11.5" height="11" rx="2" fill="none" stroke="#2c2c2c" stroke-width="1.2"/>
<rect x="777.5" y="283.5" width="19.5" height="25" fill="#222"/>
<rect x="778.5" y="284.5" width="17.5" height="23" fill="#fff"/><rect x="783.0" y="284.5" width="4.5" height="4.5" fill="#d5d5d5"/><rect x="792.0" y="284.5" width="4.0" height="4.5" fill="#d5d5d5"/><rect x="778.5" y="289.0" width="4.5" height="4.5" fill="#d5d5d5"/><rect x="787.5" y="289.0" width="4.5" height="4.5" fill="#d5d5d5"/><rect x="783.0" y="293.5" width="4.5" height="4.5" fill="#d5d5d5"/><rect x="792.0" y="293.5" width="4.0" height="4.5" fill="#d5d5d5"/><rect x="778.5" y="298.0" width="4.5" height="4.5" fill="#d5d5d5"/><rect x="787.5" y="298.0" width="4.5" height="4.5" fill="#d5d5d5"/><rect x="783.0" y="302.5" width="4.5" height="4.5" fill="#d5d5d5"/><rect x="792.0" y="302.5" width="4.0" height="4.5" fill="#d5d5d5"/><rect x="778.5" y="307.0" width="4.5" height="0.5" fill="#d5d5d5"/><rect x="787.5" y="307.0" width="4.5" height="0.5" fill="#d5d5d5"/>
<rect x="751" y="312" width="198" height="2" fill="#303030"/>
<path d="M710.9 331.5Q718.5 318.0 726.1 331.5" stroke="#c4c4c4" stroke-width="1.7" fill="none" stroke-linecap="round"/><circle cx="718.5" cy="329.5" r="3.3" fill="#c8c8c8"/>
<rect x="735.3" y="324.0" width="11.5" height="11" rx="2" fill="none" stroke="#2c2c2c" stroke-width="1.2"/>
<rect x="759.5" y="316.5" width="19.5" height="25.5" fill="#222"/>
<rect x="760.5" y="317.5" width="17.5" height="23.5" fill="#fff"/><rect x="765.0" y="317.5" width="4.5" height="4.5" fill="#d5d5d5"/><rect x="774.0" y="317.5" width="4.0" height="4.5" fill="#d5d5d5"/><rect x="760.5" y="322.0" width="4.5" height="4.5" fill="#d5d5d5"/><rect x="769.5" y="322.0" width="4.5" height="4.5" fill="#d5d5d5"/><rect x="765.0" y="326.5" width="4.5" height="4.5" fill="#d5d5d5"/><rect x="774.0" y="326.5" width="4.0" height="4.5" fill="#d5d5d5"/><rect x="760.5" y="331.0" width="4.5" height="4.5" fill="#d5d5d5"/><rect x="769.5" y="331.0" width="4.5" height="4.5" fill="#d5d5d5"/><rect x="765.0" y="335.5" width="4.5" height="4.5" fill="#d5d5d5"/><rect x="774.0" y="335.5" width="4.0" height="4.5" fill="#d5d5d5"/><rect x="760.5" y="340.0" width="4.5" height="1.0" fill="#d5d5d5"/><rect x="769.5" y="340.0" width="4.5" height="1.0" fill="#d5d5d5"/>
<rect x="793" y="317.5" width="20" height="20" fill="#e8e8e8"/><rect x="795" y="319.5" width="16" height="16" fill="#4a4a4a"/>
<path d="M803 322.0L808 324.5V330.5L803 333.0L798 330.5V324.5ZM798 324.5L803 327.0L808 324.5M803 327.0V333.0" stroke="#d8d8d8" stroke-width="1.1" fill="none"/>
<rect x="751" y="346" width="198" height="2" fill="#303030"/>
<path d="M710.9 365.5Q718.5 352.0 726.1 365.5" stroke="#c4c4c4" stroke-width="1.7" fill="none" stroke-linecap="round"/><circle cx="718.5" cy="363.5" r="3.3" fill="#c8c8c8"/>
<rect x="735.3" y="358.0" width="11.5" height="11" rx="2" fill="none" stroke="#2c2c2c" stroke-width="1.2"/>
<path d="M754 362.5L759 367.5L764 362.5" stroke="#c0c0c0" stroke-width="1.3" fill="none"/>
<path d="M772 369.5V357.0Q772 355.5 773.5 355.5H778L780 357.5H788Q789 357.5 789 358.5V360.5H776Z" fill="#b4b4b4"/><path d="M772.5 370.5L776 361.5H792L788.5 370.5Z" fill="#b4b4b4"/>
<rect x="768" y="379" width="181" height="2" fill="#303030"/>
<path d="M710.9 398.5Q718.5 385.0 726.1 398.5" stroke="#c4c4c4" stroke-width="1.7" fill="none" stroke-linecap="round"/><circle cx="718.5" cy="396.5" r="3.3" fill="#c8c8c8"/>
<rect x="735.3" y="391.0" width="11.5" height="11" rx="2" fill="none" stroke="#2c2c2c" stroke-width="1.2"/>
<path d="M772 395.5L777 400.5L782 395.5" stroke="#c0c0c0" stroke-width="1.3" fill="none"/>
<path d="M790 402.5V390.0Q790 388.5 791.5 388.5H796L798 390.5H806Q807 390.5 807 391.5V393.5H794Z" fill="#b4b4b4"/><path d="M790.5 403.5L794 394.5H810L806.5 403.5Z" fill="#b4b4b4"/>
<rect x="786" y="412" width="163" height="2" fill="#303030"/>
<path d="M710.9 431.5Q718.5 418.0 726.1 431.5" stroke="#c4c4c4" stroke-width="1.7" fill="none" stroke-linecap="round"/><circle cx="718.5" cy="429.5" r="3.3" fill="#c8c8c8"/>
<rect x="735.3" y="424.0" width="11.5" height="11" rx="2" fill="none" stroke="#2c2c2c" stroke-width="1.2"/>
<rect x="796" y="416.5" width="19.5" height="25.5" fill="#222"/>
<rect x="797" y="417.5" width="17.5" height="23.5" fill="#fff"/><rect x="801.5" y="417.5" width="4.5" height="4.5" fill="#d5d5d5"/><rect x="810.5" y="417.5" width="4.0" height="4.5" fill="#d5d5d5"/><rect x="797.0" y="422.0" width="4.5" height="4.5" fill="#d5d5d5"/><rect x="806.0" y="422.0" width="4.5" height="4.5" fill="#d5d5d5"/><rect x="801.5" y="426.5" width="4.5" height="4.5" fill="#d5d5d5"/><rect x="810.5" y="426.5" width="4.0" height="4.5" fill="#d5d5d5"/><rect x="797.0" y="431.0" width="4.5" height="4.5" fill="#d5d5d5"/><rect x="806.0" y="431.0" width="4.5" height="4.5" fill="#d5d5d5"/><rect x="801.5" y="435.5" width="4.5" height="4.5" fill="#d5d5d5"/><rect x="810.5" y="435.5" width="4.0" height="4.5" fill="#d5d5d5"/><rect x="797.0" y="440.0" width="4.5" height="1.0" fill="#d5d5d5"/><rect x="806.0" y="440.0" width="4.5" height="1.0" fill="#d5d5d5"/>
<rect x="833" y="417.5" width="18.5" height="24.5" fill="#000"/><rect x="832.5" y="417.0" width="19.5" height="25.5" fill="none" stroke="#2a2a2a" stroke-width="1"/><path d="M837.25 433.5Q836.25 422.5 842.25 421.5Q848.25 422.5 847.25 433.5L845.25 431.5L843.25 433.5L841.25 430.5L839.25 433.5Z" fill="#fff"/><rect x="839.75" y="426.5" width="5" height="4" fill="#000"/>
<rect x="786" y="445" width="163" height="2" fill="#303030"/>
<path d="M710.9 464.5Q718.5 451.0 726.1 464.5" stroke="#c4c4c4" stroke-width="1.7" fill="none" stroke-linecap="round"/><circle cx="718.5" cy="462.5" r="3.3" fill="#c8c8c8"/>
<rect x="735.3" y="457.0" width="11.5" height="11" rx="2" fill="none" stroke="#2c2c2c" stroke-width="1.2"/>
<rect x="796" y="449.5" width="19.5" height="25.5" fill="#222"/>
<rect x="797" y="450.5" width="17.5" height="23.5" fill="#fff"/><rect x="801.5" y="450.5" width="4.5" height="4.5" fill="#d5d5d5"/><rect x="810.5" y="450.5" width="4.0" height="4.5" fill="#d5d5d5"/><rect x="797.0" y="455.0" width="4.5" height="4.5" fill="#d5d5d5"/><rect x="806.0" y="455.0" width="4.5" height="4.5" fill="#d5d5d5"/><rect x="801.5" y="459.5" width="4.5" height="4.5" fill="#d5d5d5"/><rect x="810.5" y="459.5" width="4.0" height="4.5" fill="#d5d5d5"/><rect x="797.0" y="464.0" width="4.5" height="4.5" fill="#d5d5d5"/><rect x="806.0" y="464.0" width="4.5" height="4.5" fill="#d5d5d5"/><rect x="801.5" y="468.5" width="4.5" height="4.5" fill="#d5d5d5"/><rect x="810.5" y="468.5" width="4.0" height="4.5" fill="#d5d5d5"/><rect x="797.0" y="473.0" width="4.5" height="1.0" fill="#d5d5d5"/><rect x="806.0" y="473.0" width="4.5" height="1.0" fill="#d5d5d5"/>
<rect x="833" y="450.5" width="18.5" height="24.5" fill="#000"/><rect x="832.5" y="450.0" width="19.5" height="25.5" fill="none" stroke="#2a2a2a" stroke-width="1"/><path d="M837.25 466.5Q836.25 455.5 842.25 454.5Q848.25 455.5 847.25 466.5L845.25 464.5L843.25 466.5L841.25 463.5L839.25 466.5Z" fill="#fff"/><path d="M839.25 461.5Q842.25 457.5 845.25 461.5V465.5H839.25Z" fill="#000"/>
<rect x="768" y="479" width="181" height="2" fill="#303030"/>
<path d="M710.9 498.5Q718.5 485.0 726.1 498.5" stroke="#c4c4c4" stroke-width="1.7" fill="none" stroke-linecap="round"/><circle cx="718.5" cy="496.5" r="3.3" fill="#c8c8c8"/>
<rect x="735.3" y="491.0" width="11.5" height="11" rx="2" fill="none" stroke="#2c2c2c" stroke-width="1.2"/>
<path d="M772 495.5L777 500.5L782 495.5" stroke="#c0c0c0" stroke-width="1.3" fill="none"/>
<path d="M790 502.5V490.0Q790 488.5 791.5 488.5H796L798 490.5H806Q807 490.5 807 491.5V493.5H794Z" fill="#b4b4b4"/><path d="M790.5 503.5L794 494.5H810L806.5 503.5Z" fill="#b4b4b4"/>
<rect x="786" y="512" width="163" height="2" fill="#303030"/>
<path d="M710.9 531.5Q718.5 518.0 726.1 531.5" stroke="#c4c4c4" stroke-width="1.7" fill="none" stroke-linecap="round"/><circle cx="718.5" cy="529.5" r="3.3" fill="#c8c8c8"/>
<rect x="735.3" y="524.0" width="11.5" height="11" rx="2" fill="none" stroke="#2c2c2c" stroke-width="1.2"/>
<rect x="796" y="516.5" width="19.5" height="25.5" fill="#222"/>
<rect x="797" y="517.5" width="17.5" height="23.5" fill="#fff"/><rect x="801.5" y="517.5" width="4.5" height="4.5" fill="#d5d5d5"/><rect x="810.5" y="517.5" width="4.0" height="4.5" fill="#d5d5d5"/><rect x="797.0" y="522.0" width="4.5" height="4.5" fill="#d5d5d5"/><rect x="806.0" y="522.0" width="4.5" height="4.5" fill="#d5d5d5"/><rect x="801.5" y="526.5" width="4.5" height="4.5" fill="#d5d5d5"/><rect x="810.5" y="526.5" width="4.0" height="4.5" fill="#d5d5d5"/><rect x="797.0" y="531.0" width="4.5" height="4.5" fill="#d5d5d5"/><rect x="806.0" y="531.0" width="4.5" height="4.5" fill="#d5d5d5"/><rect x="801.5" y="535.5" width="4.5" height="4.5" fill="#d5d5d5"/><rect x="810.5" y="535.5" width="4.0" height="4.5" fill="#d5d5d5"/><rect x="797.0" y="540.0" width="4.5" height="1.0" fill="#d5d5d5"/><rect x="806.0" y="540.0" width="4.5" height="1.0" fill="#d5d5d5"/>
<path d="M820 530.5L823.5 534.5L831 526.0" stroke="#c8c8c8" stroke-width="1.2" fill="none"/>
<rect x="833" y="517.5" width="18.5" height="24.5" fill="#000"/><rect x="832.5" y="517.0" width="19.5" height="25.5" fill="none" stroke="#2a2a2a" stroke-width="1"/><path d="M839.25 532.5H846.25L845.25 535.5H840.25Z" fill="#fff"/><circle cx="841.25" cy="528.5" r="1.5" fill="#fff"/><path d="M842.75 529.5V533.5" stroke="#fff" stroke-width="1.5"/>
<rect x="730" y="146" width="1" height="394" fill="#2b2b2b"/><rect x="751" y="146" width="1" height="394" fill="#2b2b2b"/>
<rect x="706.5" y="146" width="1" height="394" fill="#333"/>
</svg>
<div class="lt" style="left:803px;top:151px">100 %通過<br><span class="kn" style="width:52.0px"><span>フォルダー</span></span>1</div>
<div class="lt" style="left:807px;top:184px">100 %<span class="kn" style="width:62.4px"><span>オーバーレイ</span></span><br>perlin noise</div>
<div class="lt" style="left:843px;top:218px">80 %通常<br>ambient light</div>
<div class="lt" style="left:843px;top:251px">53 %通常<br>cheek</div>
<div class="lt" style="left:807px;top:285px">100 %通常<br>Highlights</div>
<div class="lt" style="left:817px;top:318px">100 %通常<br>Line 2</div>
<div class="lt" style="left:803px;top:352px">100 %通過<br>color</div>
<div class="lt" style="left:821px;top:385px">100 %通過<br>light</div>
<div class="lt" style="left:862px;top:418px">100 %加算<br>rimlight</div>
<div class="lt" style="left:862px;top:451px">100 %<span class="kn" style="width:52.0px"><span>スクリーン</span></span><br>Highlight</div>
<div class="lt" style="left:821px;top:485px">100 %通過<br>shade</div>
<div class="lt" style="left:862px;top:518px">100 %通常<br>skin</div>
</div></body></html>
